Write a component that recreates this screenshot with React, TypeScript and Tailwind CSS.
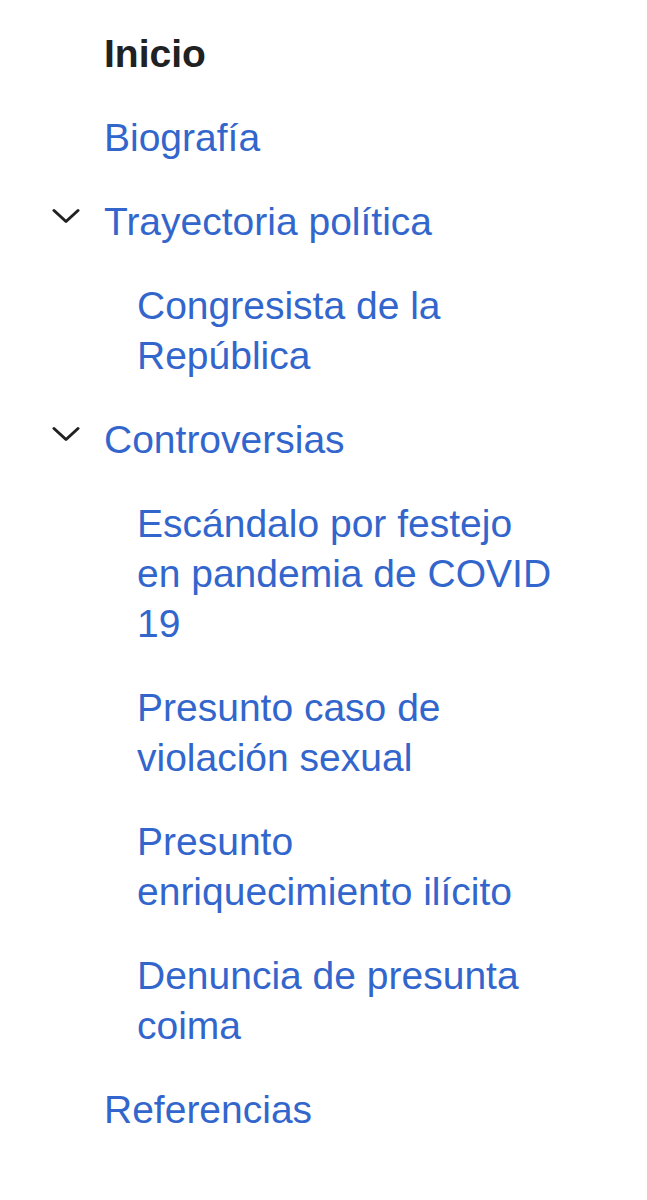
type Section = {
  title: string
  children?: string[]
}

const sections: Section[] = [
  { title: "Biografía" },
  { title: "Trayectoria política", children: ["Congresista de la República"] },
  {
    title: "Controversias",
    children: [
      "Escándalo por festejo en pandemia de COVID 19",
      "Presunto caso de violación sexual",
      "Presunto enriquecimiento ilícito",
      "Denuncia de presunta coima",
    ],
  },
  { title: "Referencias" },
]

function Chevron() {
  return (
    <svg width="28" height="16" viewBox="0 0 28 16" fill="none" className="text-[#202122]">
      <path d="M2 2.5 L14 13.5 L26 2.5" stroke="currentColor" strokeWidth={3} strokeLinecap="round" strokeLinejoin="round" />
    </svg>
  )
}

function Row({ icon, children }: { icon?: boolean; children: React.ReactNode }) {
  return (
    <li className="flex">
      <div className="w-[104px] shrink-0 flex justify-end pr-[24px] pt-[11px]">
        {icon && <Chevron />}
      </div>
      <div className="flex-1 min-w-0">{children}</div>
    </li>
  )
}

export default function App() {
  return (
    <div
      className="min-h-[1200px] bg-white pt-[29px] pr-[90px]"
      style={{ fontFamily: '"Liberation Sans", Arial, sans-serif' }}
    >
      <ul className="flex flex-col gap-[34px] text-[39px] leading-[50px]">
        <Row>
          <span className="font-bold text-[#202122]">Inicio</span>
        </Row>
        {sections.map((s) => (
          <Row key={s.title} icon={!!s.children}>
            <a href="#" className="text-[#3366cc]">
              {s.title}
            </a>
            {s.children && (
              <ul className="flex flex-col gap-[34px] mt-[34px] pl-[33px]">
                {s.children.map((c) => (
                  <li key={c}>
                    <a href="#" className="text-[#3366cc]">
                      {c}
                    </a>
                  </li>
                ))}
              </ul>
            )}
          </Row>
        ))}
      </ul>
    </div>
  )
}
